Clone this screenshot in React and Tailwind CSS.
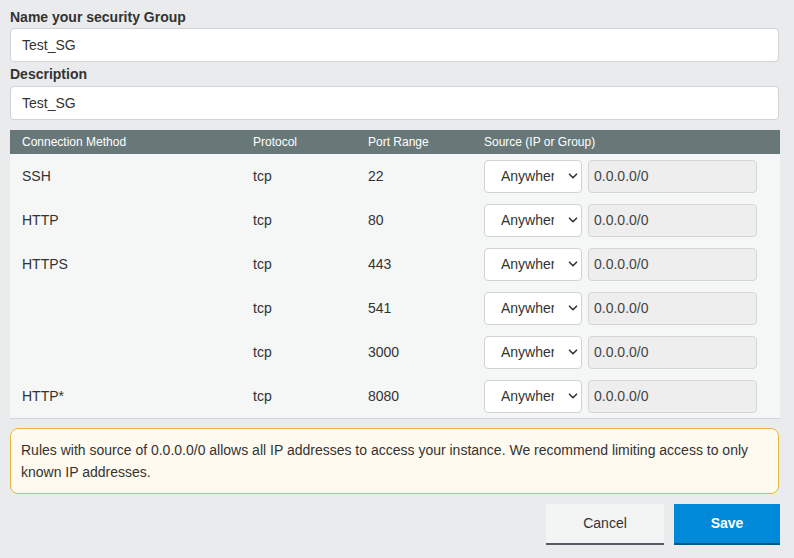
import React from "react";

const rows = [
  { m: "SSH", p: "tcp", r: "22" },
  { m: "HTTP", p: "tcp", r: "80" },
  { m: "HTTPS", p: "tcp", r: "443" },
  { m: "", p: "tcp", r: "541" },
  { m: "", p: "tcp", r: "3000" },
  { m: "HTTP*", p: "tcp", r: "8080" },
];

function Chevron() {
  return (
    <svg width="10" height="10" viewBox="0 0 10 10" fill="none">
      <path d="M1.5 3.2 L5 6.7 L8.5 3.2" stroke="#333" strokeWidth="1.6" strokeLinecap="round" strokeLinejoin="round" />
    </svg>
  );
}

export default function App() {
  return (
    <div
      className="w-[794px] h-[558px] bg-[#e9ebed] text-[#333] overflow-hidden px-[10px] pt-[7px]"
      style={{ fontFamily: '"Liberation Sans", Arial, sans-serif' }}
    >
      <div className="text-[14px] font-bold leading-[20px] h-[21px]">Name your security Group</div>
      <div className="w-[769px] h-[34px] bg-white border border-[#cfd3d5] rounded-[4px] flex items-center px-[11px] text-[14px]">
        Test_SG
      </div>
      <div className="text-[14px] font-bold leading-[20px] h-[24px] pt-[2px]">Description</div>
      <div className="w-[769px] h-[34px] bg-white border border-[#cfd3d5] rounded-[4px] flex items-center px-[11px] text-[14px]">
        Test_SG
      </div>

      <div className="mt-[10px] w-[770px]">
        <div className="h-[24px] bg-[#687878] text-white text-[12px] grid grid-cols-[231px_115px_116px_1fr] items-center pl-[12px]">
          <div>Connection Method</div>
          <div>Protocol</div>
          <div>Port Range</div>
          <div>Source (IP or Group)</div>
        </div>
        <div className="bg-[#f5f6f6] border-b border-[#d3d7d9]">
          {rows.map((row, i) => (
            <div key={i} className="h-[44px] grid grid-cols-[231px_115px_116px_1fr] items-center pl-[12px] text-[14px]">
              <div>{row.m}</div>
              <div>{row.p}</div>
              <div>{row.r}</div>
              <div className="flex items-center gap-[6px]">
                <div className="w-[98px] h-[33px] bg-white border border-[#cfd3d5] rounded-[4px] flex items-center pl-[16px] pr-[3px]">
                  <span className="w-[53px] overflow-hidden whitespace-nowrap">Anywhere</span>
                  <span className="ml-auto flex items-center"><Chevron /></span>
                </div>
                <div className="w-[169px] h-[33px] bg-[#eeeeee] border border-[#d3d5d6] rounded-[4px] flex items-center px-[5px] text-[#444]">
                  0.0.0.0/0
                </div>
              </div>
            </div>
          ))}
        </div>
      </div>

      <div className="mt-[9px] w-[769px] h-[66px] bg-[#fffaef] border border-[#eab53b] rounded-[8px] px-[10px] pt-[10px] text-[14px] leading-[22px]">
        Rules with source of 0.0.0.0/0 allows all IP addresses to access your instance. We recommend limiting access to only known IP addresses.
      </div>

      <div className="mt-[10px] w-[770px] flex justify-end gap-[10px]">
        <button className="w-[118px] h-[41px] bg-[#f3f4f4] border-b-2 border-[#545b64] text-[14px] text-[#333]">
          Cancel
        </button>
        <button className="w-[106px] h-[41px] bg-[#0089d8] border-b-2 border-[#005a8e] text-[14px] font-bold text-white">
          Save
        </button>
      </div>
    </div>
  );
}
